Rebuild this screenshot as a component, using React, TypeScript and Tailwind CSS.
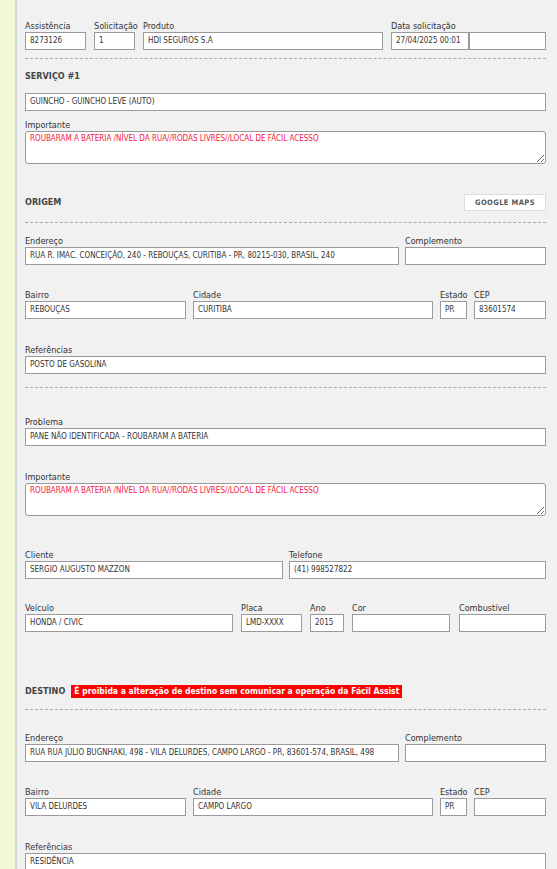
import React from "react"

const font = { fontFamily: "Tahoma, 'DejaVu Sans Condensed', 'DejaVu Sans', sans-serif" }

const boxCls =
  "flex h-[18px] w-full items-center overflow-hidden whitespace-nowrap border border-[#9a9a9a] bg-white px-[4px] text-[8px] leading-[12px] text-[#333]"

function Box({ value = "", className = "" }: { value?: string; className?: string }) {
  return <div className={boxCls + " " + className}>{value}</div>
}

function Field({
  label,
  value = "",
  className = "",
}: {
  label: string
  value?: string
  className?: string
}) {
  return (
    <div className={"flex flex-col " + className}>
      <label className="h-[13px] whitespace-nowrap text-[9px] leading-[14px] text-[#333]">{label}</label>
      <Box value={value} />
    </div>
  )
}

function Note({ label, value, className = "" }: { label: string; value: string; className?: string }) {
  return (
    <div className={"flex flex-col " + className}>
      <label className="h-[13px] text-[9px] leading-[14px] text-[#333]">{label}</label>
      <textarea
        readOnly
        defaultValue={value}
        className="h-[33px] w-full resize-y rounded-[3px] border border-[#9a9a9a] bg-white px-[4px] py-[1px] text-[8px] leading-[11px] text-[#f5143c] outline-none"
      />
    </div>
  )
}

const Dashed = ({ className = "" }: { className?: string }) => (
  <div className={"border-t border-dashed border-[#aaa] " + className} />
)

export default function App() {
  const importante = "ROUBARAM A BATERIA /NÍVEL DA RUA//RODAS LIVRES//LOCAL DE FÁCIL ACESSO"

  return (
    <div className="flex h-[869px] w-full overflow-hidden bg-[#f1f1f1]" style={font}>
      {/* side strip */}
      <div className="w-[17px] shrink-0 border-r-2 border-[#d6d6d6] bg-[#f3f7d4]" />

      <div className="flex-1 pl-[8px] pr-[11px] pt-[19px]">
        {/* header row */}
        <div className="flex">
          <Field label="Assistência" value="8273126" className="w-[61px]" />
          <Field label="Solicitação" value="1" className="ml-[8px] w-[41px]" />
          <Field label="Produto" value="HDI SEGUROS S.A" className="ml-[8px] w-[240px]" />
          <Field label="Data solicitação" value="27/04/2025 00:01" className="ml-[8px] w-[78px]" />
          <Field label="" className="w-[77px]" />
        </div>

        <Dashed className="mt-[8px]" />

        <h2 className="mt-[10px] h-[13px] text-[9px] font-bold leading-[14px] text-[#444]">SERVIÇO #1</h2>
        <Box value="GUINCHO - GUINCHO LEVE (AUTO)" className="mt-[11px]" />
        <Note label="Importante" value={importante} className="mt-[7px]" />

        {/* origem */}
        <div className="mt-[30px] flex h-[17px] items-center justify-between">
          <h2 className="text-[9px] font-bold text-[#444]">ORIGEM</h2>
          <button className="flex h-[17px] w-[82px] items-center justify-center border border-[#dcdcdc] bg-white text-[7.5px] font-bold tracking-[0.4px] text-[#555]">
            GOOGLE MAPS
          </button>
        </div>

        <Dashed className="mt-[11px]" />

        <div className="mt-[11px] flex">
          <Field
            label="Endereço"
            value="RUA R. IMAC. CONCEIÇÃO, 240 - REBOUÇAS, CURITIBA - PR, 80215-030, BRASIL, 240"
            className="w-[374px]"
          />
          <Field label="Complemento" className="ml-[6px] w-[141px]" />
        </div>

        <div className="mt-[23px] flex">
          <Field label="Bairro" value="REBOUÇAS" className="w-[161px]" />
          <Field label="Cidade" value="CURITIBA" className="ml-[7px] w-[240px]" />
          <Field label="Estado" value="PR" className="ml-[7px] w-[27px]" />
          <Field label="CEP" value="83601574" className="ml-[7px] w-[72px]" />
        </div>

        <Field label="Referências" value="POSTO DE GASOLINA" className="mt-[24px]" />

        <Dashed className="mt-[13px]" />

        <Field label="Problema" value="PANE NÃO IDENTIFICADA - ROUBARAM A BATERIA" className="mt-[27px]" />
        <Note label="Importante" value={importante} className="mt-[24px]" />

        <div className="mt-[32px] flex">
          <Field label="Cliente" value="SERGIO AUGUSTO MAZZON" className="w-[258px]" />
          <Field label="Telefone" value="(41) 998527822" className="ml-[6px] w-[257px]" />
        </div>

        <div className="mt-[22px] flex">
          <Field label="Veículo" value="HONDA / CIVIC" className="w-[208px]" />
          <Field label="Placa" value="LMD-XXXX" className="ml-[8px] w-[61px]" />
          <Field label="Ano" value="2015" className="ml-[8px] w-[34px]" />
          <Field label="Cor" className="ml-[8px] w-[98px]" />
          <Field label="Combustível" className="ml-[9px] w-[87px]" />
        </div>

        {/* destino */}
        <div className="mt-[53px] flex h-[13px] items-center">
          <h2 className="text-[9px] font-bold text-[#444]">DESTINO</h2>
          <span className="ml-[6px] bg-[#ff0000] px-[3px] text-[8.5px] font-bold leading-[13px] text-white">
            É proibida a alteração de destino sem comunicar a operação da Fácil Assist
          </span>
        </div>

        <Dashed className="mt-[11px]" />

        <div className="mt-[21px] flex">
          <Field
            label="Endereço"
            value="RUA RUA JÚLIO BUGNHAKI, 498 - VILA DELURDES, CAMPO LARGO - PR, 83601-574, BRASIL, 498"
            className="w-[374px]"
          />
          <Field label="Complemento" className="ml-[6px] w-[141px]" />
        </div>

        <div className="mt-[23px] flex">
          <Field label="Bairro" value="VILA DELURDES" className="w-[161px]" />
          <Field label="Cidade" value="CAMPO LARGO" className="ml-[7px] w-[240px]" />
          <Field label="Estado" value="PR" className="ml-[7px] w-[27px]" />
          <Field label="CEP" className="ml-[7px] w-[72px]" />
        </div>

        <Field label="Referências" value="RESIDÊNCIA" className="mt-[24px]" />
      </div>
    </div>
  )
}
